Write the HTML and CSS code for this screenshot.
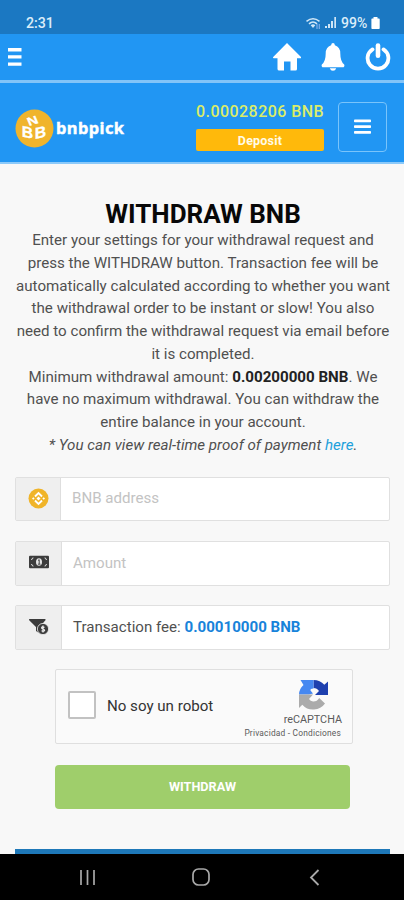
FILE: index.html
```html
<!DOCTYPE html>
<html lang="en">
<head>
<meta charset="utf-8">
<meta name="viewport" content="width=device-width, initial-scale=1">
<title>Withdraw BNB</title>
<link rel="stylesheet" href="styles.css">
</head>
<body>
<div class="screen">
  <div class="status">
    <span class="clock">2:31</span>
    <div class="status-right">
      <svg width="15" height="13" viewBox="0 0 15 13" fill="none" stroke="#cfe6f7" stroke-width="1.6"><path d="M.5 4.300Q7 -.9 13.500 4.300M3 6.800Q7 3.200 11 6.800"/><path d="M4.700 8.200Q7 6.300 9.300 8.200L7 11z" fill="#cfe6f7" stroke="none"/><path d="M11 7v5M13.300 7v5" stroke="#7faeea" stroke-width="1.200"/></svg>
      <svg class="signal" width="12" height="12" viewBox="0 0 12 12" fill="#cfe6f7"><path d="M0 9h2v2H0zM3 7h2v4H3zM6 4h2v7H6zM9.300 0h1.700v11H9.300z"/></svg>
      <span class="percent">99%</span>
      <svg width="9" height="13" viewBox="0 0 9 13" fill="#fff"><path d="M2.500 0h4v1.500H8q.7 0 .7.700v9q0 .8-.8.800H1.200q-.8 0-.8-.8v-9q0-.7.7-.7h1.400z"/></svg>
    </div>
  </div>
  <div class="appbar">
    <svg width="14" height="20" viewBox="0 0 14 20" fill="#fff"><path d="M0 1h13.500v3.400H0zM0 8.200h13.500v3.400H0zM0 15.400h13.500v3.400H0z"/></svg>
    <div class="actions">
      <svg width="28" height="28" viewBox="0 0 28 28" fill="#fff"><path d="M14 0L28 14q.4 1-.6 1.200H24V26q0 1.500-1.500 1.500h-5V18.500h-6.500v9H6.200Q4.500 27.500 4.500 26V15.200H.7q-1.100-.2-.5-1.200z"/></svg>
      <svg width="24" height="28" viewBox="0 0 24 28" fill="#fff"><path d="M12 0q1.700 0 1.900 2.300Q19.300 4 19.300 10.500q0 8 3.900 11 .8 1.500-.6 2.700H1.400Q0 23 .8 21.500q3.900-3 3.900-11Q4.700 4 10.100 2.300 10.300 0 12 0zM8.800 25.300h6.400Q14.400 27.800 12 27.800T8.800 25.300z"/></svg>
      <svg width="26" height="28" viewBox="0 0 26 28" fill="none" stroke="#fff" stroke-linecap="round"><path d="M7.500 6.400a10.400 10.400 0 1 0 11 0" stroke-width="3.800"/><path d="M13 2.500v10.300" stroke-width="4.600"/></svg>
    </div>
  </div>
  <header class="header">
    <div class="brand">
      <svg width="39" height="39" viewBox="0 0 39 39"><circle cx="19.500" cy="19.500" r="19" fill="#f0b42c"/><g class="cube"><text transform="matrix(1.050 .22 0 1.050 6.800 27.500)">B</text><text transform="matrix(1.050 -.22 0 1.050 19.800 30)">B</text><text transform="matrix(.95 -.28 .3 .72 14 17)">N</text></g></svg>
      <span class="brand-name">bnbpick</span>
    </div>
    <div class="wallet">
      <div class="balance">0.00028206 BNB</div>
      <button class="deposit">Deposit</button>
    </div>
    <button class="menu"><svg width="18" height="16" viewBox="0 0 18 16" fill="#fff"><rect width="17" height="2.800" rx=".8" y=".5"/><rect width="17" height="2.800" rx=".8" y="6.200"/><rect width="17" height="2.800" rx=".8" y="11.900"/></svg></button>
  </header>
  <main class="content">
    <h1>WITHDRAW BNB</h1>
    <p class="info">
      <span>Enter your settings for your withdrawal request and</span>
      <span>press the WITHDRAW button. Transaction fee will be</span>
      <span>automatically calculated according to whether you want</span>
      <span>the withdrawal order to be instant or slow! You also</span>
      <span>need to confirm the withdrawal request via email before</span>
      <span>it is completed.</span>
      <span>Minimum withdrawal amount: <b>0.00200000 BNB</b>. We</span>
      <span>have no maximum withdrawal. You can withdraw the</span>
      <span>entire balance in your account.</span>
      <span class="note">* You can view real-time proof of payment <a>here</a>.</span>
    </p>
    <div class="field first">
      <div class="addon"><svg width="21" height="21" viewBox="0 0 21 21"><circle cx="10.500" cy="10.500" r="10" fill="#f0b429"/><path d="M7 8.500l3.500-3.500L14 8.500M7 12.500l3.500 3.500 3.500-3.500" fill="none" stroke="#fff" stroke-width="1.900"/><path d="M10.500 8.500l2 2-2 2-2-2zM5.300 9.200l1.300 1.300-1.300 1.300L4 10.500zM15.700 9.200l1.300 1.300-1.300 1.300-1.300-1.300z" fill="#fff"/></svg></div>
      <div class="value placeholder">BNB address</div>
    </div>
    <div class="field">
      <div class="addon"><svg class="note-icon" width="20" height="14" viewBox="0 0 20 14"><rect width="20" height="12.500" y=".7" rx="1" fill="#3c3c3c"/><path d="M2 4.500q2 0 2-2M16 2.500q0 2 2 2M18 9.500q-2 0-2 2M4 11.500q0-2-2-2" fill="none" stroke="#ddd"/><ellipse cx="10" cy="7" rx="3" ry="3.800" fill="#e6e6e6"/><path d="M9 5.500l1.200-.8v4.300M8.900 9.200h2.600" fill="none" stroke="#444"/></svg></div>
      <div class="value placeholder">Amount</div>
    </div>
    <div class="field">
      <div class="addon"><svg width="20" height="18" viewBox="0 0 20 18"><path d="M.5 1h15.700q.8.800 0 1.600L11.500 8v8L7 13V9L.2 2.200Q-.3 1.500.5 1z" fill="#3c3c3c"/><circle cx="14" cy="11" r="5.600" fill="#3c3c3c" stroke="#efefef" stroke-width=".8"/><path d="M15.500 9.400q-2.900-1.300-2.900.3 0 .9 1.500 1.300 1.700.5 1.500 1.500-.6 1.200-3.100.2M14 7.500v7" fill="none" stroke="#efefef" stroke-width="1.200"/></svg></div>
      <div class="value">Transaction fee:&nbsp;<b>0.00010000 BNB</b></div>
    </div>
    <div class="captcha">
      <div class="checkbox"></div>
      <span class="robot">No soy un robot</span>
      <div class="captcha-brand">
        <svg width="31" height="31" viewBox="0 0 31 31"><path d="M15.500 1C20 1 23.500 3 26.300 5.800L30 2.500V16H17l4-4q-2-3-5.500-3z" fill="#1e40af"/><path d="M15.500 1v8.500q-3.500 0-3 2l2.500 3-4 1H1Q1 10 5.500 6L2.500 1z" fill="#4688f1"/><path d="M1 15.500V29l3.300-3.300Q9 31 16 30.500q7-.4 11-6L21.200 19Q19 22.700 15 22.500q-2.600-.2-4-2.500l4-4.500z" fill="#ababab"/></svg>
        <span class="captcha-name">reCAPTCHA</span>
        <span class="captcha-links">Privacidad - Condiciones</span>
      </div>
    </div>
    <button class="submit">WITHDRAW</button>
    <div class="panel"></div>
  </main>
  <nav class="navbar">
    <svg width="17" height="17" viewBox="0 0 17 17" stroke="#a9a9a9" stroke-width="1.700"><path d="M2 1v15M8.500 1v15M15 1v15"/></svg>
    <svg class="home" width="18" height="18" viewBox="0 0 18 18" fill="none" stroke="#a9a9a9" stroke-width="1.700"><rect x="1" y="1" width="16" height="16" rx="5.500"/></svg>
    <svg width="11" height="17" viewBox="0 0 11 17" fill="none" stroke="#a9a9a9" stroke-width="1.800"><path d="M9.500 1L2 8.500 9.500 16"/></svg>
  </nav>
</div>
</body>
</html>
```
FILE: styles.css
```css
* { box-sizing: border-box; }
body { margin: 0; font-family: Roboto, "Liberation Sans", sans-serif; color: #505050; background: #f8f8f8; }
button { font-family: inherit; padding: 0; border: 0; }
svg { display: block; flex: none; }
.screen { width: 404px; height: 900px; overflow: hidden; display: flex; flex-direction: column; }
.status { height: 34px; background: #1b78c2; display: flex; justify-content: space-between; padding: 12px 24px 0 26px; color: #dcedf9; }
.clock { font-size: 14.2px; line-height: 22px; font-weight: 500; }
.status-right { display: flex; align-items: center; height: 22px; }
.signal { margin: 0 4px 0 4px; }
.percent { font-size: 14px; font-weight: 500; margin-right: 1px; width: 29px; }
.appbar { height: 49px; background: #2196f3; border-bottom: 3px solid #83c4f8; display: flex; justify-content: space-between; align-items: center; padding: 0 13px 0 8px; }
.actions { display: flex; gap: 20px; }
.header { height: 81px; background: #2196f3; border-bottom: 2px solid #8ccafa; display: flex; align-items: center; padding: 8px 17px 0 15px; }
.brand { display: flex; align-items: center; gap: 2px; width: 181px; padding-top: 3px; }
.cube { fill: #fff; font: 700 15px "Liberation Sans", sans-serif; stroke: #fff; stroke-width: .3px; }
.brand-name { color: #fff; font: 700 16.5px "Noto Sans", sans-serif; line-height: 24px; letter-spacing: .4px; -webkit-text-stroke: .4px #fff; }
.wallet { width: 128px; height: 49px; display: flex; flex-direction: column; justify-content: space-between; }
.balance { color: #dbed68; font-size: 16px; line-height: 20px; font-weight: 500; letter-spacing: .45px; white-space: nowrap; }
.deposit { height: 22px; border-radius: 2px; background: #ffb90b; color: #fffbe8; font-size: 12.5px; font-weight: 700; letter-spacing: .2px; }
.menu { width: 49px; height: 50px; margin-left: auto; border: 1.500px solid #79c4fb; border-radius: 4px; background: none; display: flex; justify-content: center; align-items: center; }
.content { height: 690px; padding: 35px 14px 0 15px; display: flex; flex-direction: column; }
h1 { margin: 0; color: #080808; font-size: 26px; line-height: 31px; height: 30px; font-weight: 700; text-align: center; padding-left: 1px; }
.info { margin: 0; font-size: 15.13px; line-height: 22.75px; text-align: center; padding-left: 1px; }
.info span { display: block; white-space: nowrap; }
.info b { color: #222; font-weight: 700; }
.note { font-style: italic; }
.note a { color: #1ea1dc; }
.field { height: 45px; margin-top: 19px; border: 1.500px solid #e0e0e0; border-radius: 2px; background: #fff; display: flex; flex: none; }
.field.first { height: 44px; margin-top: 20px; margin-bottom: 1px; }
.addon { width: 46px; background: #efefef; border-right: 1px solid #dedede; display: flex; align-items: center; justify-content: center; }
.note-icon { margin-top: -3px; }
.value { padding: 0 0 1px 11px; display: flex; align-items: center; font-size: 15.1px; }
.first .addon { width: 45px; }
.value b { color: #1783da; font-weight: 700; }
.value.placeholder { color: #c3c3c3; }
.captcha { width: 298px; height: 75px; flex: none; margin: 19.5px 0 0 40px; border: 1.500px solid #dfdfdf; border-radius: 2px; background: #fafafa; display: flex; align-items: center; padding: 0 11px 0 12px; }
.checkbox { width: 28px; height: 28px; border: 2px solid #c2c2c2; border-radius: 2px; background: #fff; margin-top: -3px; }
.robot { margin: -2px 0 0 11px; font-size: 15.1px; color: #333; }
.captcha-brand { margin-left: auto; padding-top: 4px; display: flex; flex-direction: column; align-items: flex-end; color: #5b5b5b; }
.captcha-brand svg { margin-right: 12px; }
.captcha-name { font-size: 10.8px; line-height: 14px; margin-top: 3px; margin-right: -1px; }
.captcha-links { font-size: 8.400px; line-height: 12px; letter-spacing: .2px; }
.submit { width: 295px; height: 44px; flex: none; margin: 21px 0 0 40px; border-radius: 4px; background: #9fce6b; color: #fff; font-size: 12.7px; font-weight: 700; padding-bottom: 1px; }
.panel { height: 5px; flex: none; margin-top: auto; background: #1e78b8; }
.navbar { height: 46px; background: #000; display: flex; align-items: center; justify-content: space-between; padding: 0 84px 0 79px; }
.home { margin-right: 3px; }
```
